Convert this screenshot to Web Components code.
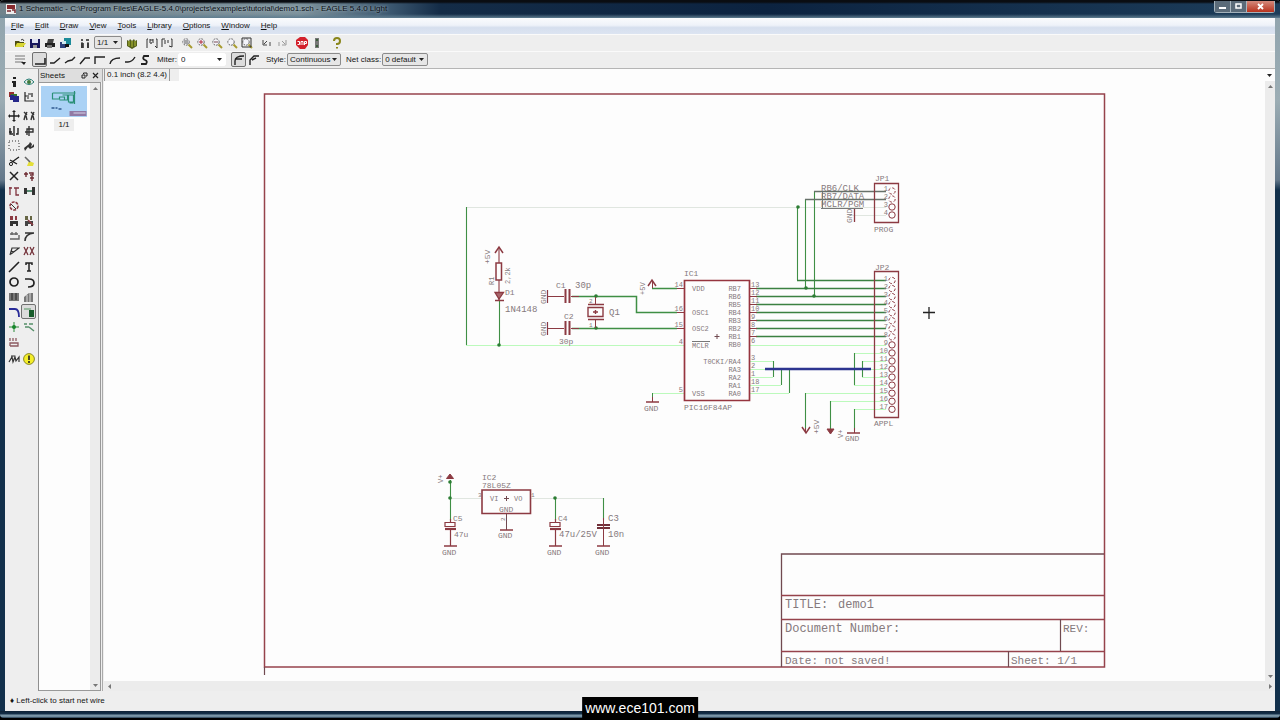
<!DOCTYPE html>
<html lang="en">
<head>
<meta charset="utf-8">
<title>1 Schematic - demo1.sch - EAGLE 5.4.0 Light</title>
<style>
html,body{height:100%;margin:0}
body{background:#000;font:8px/12px "Liberation Sans",sans-serif;color:#151515;overflow:hidden}
</style>
</head>
<body>
<eagle-window></eagle-window>
<script>
const S = (d, c = '#222', w = 1.4, f = 'none') => `<path d="${d}" stroke="${c}" stroke-width="${w}" fill="${f}"/>`;
const F = (d, c = '#222') => `<path d="${d}" fill="${c}"/>`;
const lens = '<circle cx="5" cy="5" r="3.2" fill="#f4f4fa" stroke="#666" stroke-width="1" stroke-dasharray="2 1"/>' + S('M7.5 7.5L11 11', '#a89b30', 2);
const R = '#8c3a42', G = '#3f8f45';
const ICONS = {
  open: F('M1 4h4l1 1h4v5H1z', '#4d4d12') + F('M3 6h9l-3 4H1z', '#d8d632') + S('M7 3q2-2 3 1', '#333', 1),
  save: F('M1 2h10v9H1z', '#17175c') + F('M3 2h6v4H3z', '#dfe3f2') + F('M4 8h4v3H4z', '#999'),
  print: F('M1 6h10v4H1z') + F('M4 2h6l-1 4H3z', '#444') + F('M3 8h5v3H3z', '#777'),
  cam: F('M5 1h7v7H5z', '#1c8b9a') + F('M1 5h6v6H1z', '#2c3f7a') + F('M3 4h4v3H3z', '#cfe9ef') + F('M6 7h4v3H6z', '#111'),
  board: F('M2 2h2v2H2zM7 2h3v2H7zM2 6h3v5H2zM8 6h2v5H8z', '#555') + S('M3 5v6M9 5v6', '#222', 1),
  use: F('M1 3l2 1 1-2 2 2 2-2 1 2 2-1v6l-5 3-5-3z', '#55601c') + S('M3 4v5M6 4v6M9 4v5', '#b5c136', 1),
  script: S('M1 11V2h1M4 2v4M7 2v4M4 3h3M10 2h1v9l-2-2', '#333', 1) + F('M4 5h2v2H4z', '#777'),
  run: S('M1 10V2h3M4 3v4M7 3v3M10 2h1v8l-3-1', '#333', 1),
  zfit: lens + S('M3 4h4M3 6h4', '#555', 1), zin: lens + S('M3 5h4M5 3v4', '#b02838', 1),
  zout: lens + S('M3 5h4', '#7a4b55', 1), zredraw: lens, zsel: lens + S('M1 1h9v9H1z', '#333', 1),
  undo: S('M2 3v5h4M3 7l3-3M9 5v4', '#444', 1), redo: S('M10 3v5H6M9 7L6 4M3 5v4', '#999', 1),
  stop: F('M4 0h5l3 3v5l-3 4H4L0 8V3z', '#d3202b') + S('M1.5 4.500h2v3h-2M5 8V4.500h2V8M8.500 8V4.500h2v2h-2', '#fff', 1),
  go: F('M4 1h4v10H4z', '#777') + F('M5 2h2v2H5zM5 8h2v2H5z', '#3b5d3b'),
  help: S('M3 4q0-3 3-3t3 3-3 3v1M6 10v1.5', '#8a861a', 2),
  list: S('M1 2h10M1 5h10M1 8h8', '#777', 1) + F('M7 8h5l-2 3z'),
  b0: S('M1 10h10V4', '#222', 1.6), b1: S('M1 9h4l6-5'), b2: S('M1 9l3-2 4-1 3-3'), b3: S('M1 10l5-6h5'),
  b4: S('M1 10V3h10'), b5: S('M1 10q1-6 10-6'), b6: S('M1 8h3q4 0 7-5'), b7: S('M10 2H5q-2 3 1 4t1 4H2', '#222', 1.8),
  m0: S('M2 11V7q0-5 9-5M3 5l6 0', '#222', 1.4), m1: S('M2 11V6l4-4h5M4 6l4-2', '#222', 1.4),
  info: F('M5 1h3v2H5zM4 5h4v6H5V7H4z'),
  show: S('M1 6q5-6 10 0q-5 5-10 0z', '#267d73', 1) + '<circle cx="6" cy="6" r="2" fill="#3d7a3d"/>',
  display: F('M1 1h5v5H1z', '#962e2e') + F('M3 3h6v6H3z', '#35762c') + F('M5 5h6v6H5zM2 4h4v5H2z', '#25278a'),
  mark: S('M2 1v9h9M4 7h2M5 3h3M9 2v4M2 5h4', '#222', 1.2),
  move: S('M6 1v10M1 6h10') + F('M6 0l2 2H4zM6 12l2-2H4zM0 6l2-2v4zM12 6l-2-2v4z'),
  copy: S('M1 2l3 3M4 2L2 6l-1 4M3 6l1 4M8 2l3 3M11 2L9 6l-1 4M10 6l1 4', '#333'),
  mirror: S('M6 1v10M2 3v6h3M10 3v6H8M1 7h3'), rotate: S('M6 1v10M2 7h8V4H4v6', '#333'),
  group: '<path d="M1 1h10v9H1z" fill="none" stroke="#333" stroke-dasharray="1 2"/>',
  change: F('M1 8l5-4 1-2 2 2-1 3 3-3v3L7 9 5 7l-3 4z', '#333'),
  cut: S('M11 2L4 7M2 5l7 4') + '<circle cx="3" cy="9" r="1.6" fill="none" stroke="#222"/>',
  paste: F('M6 6l5 2-1 3H4z', '#e4df38') + S('M2 2l5 5', '#666', 1.6),
  del: S('M2 2l8 8M10 2l-8 8', '#222', 1.5),
  add: S('M1 4h4M3 2v5M6 3h4v2H7M7 8h4M9 6v5', '#6d2b32', 1.4),
  pinswap: S('M2 2v8M1 3h3M6 3h5M8 3v7h3', '#803540', 1.3),
  replace: F('M1 3h3v6H1zM9 2h3v8H9z', '#333') + S('M4 6h5', '#286a4b'),
  gate: '<circle cx="6" cy="6" r="4" fill="none" stroke="#8c3a42" stroke-width="1.6" stroke-dasharray="3 1"/>' + S('M3 4l5 5', '#333', 1),
  name: F('M2 1h3v4H2zM7 1h2v4H7z', R) + F('M2 6h8v5H8V9H5v2H2z', '#333'),
  value: F('M2 1h3v4H2zM7 1h2v4H7z', '#664') + F('M2 6h8v5H8V9H5v2H2z', '#444') + S('M5 5l5 5', R, 1.6),
  smash: S('M2 4h8M2 9h9V5M4 2v3M8 2v3', '#666', 1.4), miter: S('M2 11q0-7 9-8M2 3h9', '#333', 1.6),
  split: S('M2 10L4 3h7L3 9M3 6l3 1', '#333', 1.2), invoke: S('M1 2l4 8M5 2L1 10M7 2l4 8M11 2l-4 8', '#74333b', 1.3),
  wire: S('M1 11L11 1', '#222', 1.6), text: S('M3 4V2h6v2M6 2v8M4 10h4', '#222', 1.5),
  circle: '<circle cx="6" cy="6" r="4" fill="none" stroke="#222" stroke-width="1.7"/>',
  arc: S('M2 3h4q5 0 5 4t-6 4', '#222', 1.7), rect: F('M1 2h10v8H1z', '#777') + S('M4 2v7M8 2v7', '#222', 1),
  poly: F('M1 6l5-4h4v9H1z', '#777') + S('M4 4v7M7 2v9', '#ddd', 1),
  bus: S('M1 3h6q4 0 4 8', '#282b99', 1.8), net: S('M1 3h7', '#81ae8b', 1.5) + F('M6 4h5v7H6z', '#185d2c'),
  junction: S('M6 1v10M1 6h10', '#2d8a3a', 1) + '<circle cx="6" cy="6" r="2" fill="#16862b"/>',
  label: S('M1 3h3M6 3h4M2 6h4M6 6l5 4', '#56906a', 1.5),
  attr: S('M2 2v3M5 2v3M8 2v3M2 10V7h8v3H2', '#8c5960', 1.3),
  erc: S('M1 9l3-5 1 5 2-5 1 4 3-4v5M3 3h4', '#333', 1.2),
  errors: '<circle cx="6" cy="6" r="5.4" fill="#f4ee29" stroke="#8b8822"/>' + S('M6 2.500v4.500M6 8v2', '#222', 1.6)
};
const define = (tag, css, html) => customElements.define(tag, class extends HTMLElement {
  connectedCallback() {
    if (this.shadowRoot) return;
    const r = this.attachShadow({ mode: 'open' });
    r.innerHTML = `<style>*{box-sizing:border-box}${css}</style>` + (typeof html === 'function' ? html(this) : html);
  }
});
const tools = (list, pressed = '') => list.split(' ').map(n => `<tool-button icon="${n}"${n === pressed ? ' pressed' : ''}></tool-button>`).join('');

define('tool-button', `
:host{display:flex;width:15px;height:15px;flex:none}
button{display:flex;align-items:center;justify-content:center;width:100%;height:100%;padding:0;border:1px solid transparent;border-radius:2px;background:none}
:host([pressed]) button{border-color:#707070;background:#dcdcdc}
svg{width:12px;height:12px;flex:none}`,
  e => `<button aria-label="${e.getAttribute('icon')}"><svg viewBox="0 0 12 12">${ICONS[e.getAttribute('icon')]}</svg></button>`);

define('combo-box', `
:host{display:flex;align-items:center;gap:1px;flex:none}
select{appearance:none;height:13px;width:var(--w,50px);margin:0;padding:0 0 0 2px;border:1px solid #8b8b8b;border-radius:2px;font:inherit;line-height:11px;color:#151515;
background:#e6e6e6 url("data:image/svg+xml,%3Csvg xmlns='http://www.w3.org/2000/svg' width='5' height='3'%3E%3Cpath d='M0 0h5L2.500 3z' fill='%23222'/%3E%3C/svg%3E") no-repeat right 3px center}
:host([flat]) select{background-color:#fff;border-color:#fff}`,
  e => {
    const label = e.getAttribute('label');
    return `${label ? `<label for="s">${label}</label>` : ''}<select id="s" aria-label="${label || 'Sheet'}"><option>${e.getAttribute('value')}</option></select>`;
  });

define('title-bar', `
:host{display:flex;align-items:center;height:18px;padding-left:6px;background:linear-gradient(#0a0d12 0,#0a0d12 2px,transparent 4px,transparent 14px,#5f7d90 18px),linear-gradient(90deg,#71838c,#7d929c 300px,#3c5870 390px,#142c47 440px,#0c2340 60%,#1d3d5a)}
.app{width:10px;height:10px;flex:none}
h1{flex:1;margin:0 0 0 3px;font:inherit;color:#0b0f14;white-space:nowrap;text-shadow:0 0 3px #b9c8d0}
.ctl{display:flex;align-self:flex-start;margin-top:1px;border:1px solid #a4b2bb;border-top:0;border-radius:0 0 3px 3px}
button{width:16px;height:11px;padding:0;border:0;border-right:1px solid #aab7c0;background:#5b6b79;display:flex;align-items:center;justify-content:center}
button:last-child{width:27px;border:0;background:linear-gradient(#d48a7c,#b8321d)}
.ctl{margin-right:5px}
svg{width:9px;height:7px}`,
  `<svg class="app" viewBox="0 0 10 10"><path d="M0 0h10v10H0z" fill="#eee"/><path d="M1 1h8v4H1z" fill="#872b30"/><path d="M1 7h4M6 6h3v3" stroke="#7b2a30" stroke-width="1.500" fill="none"/></svg>
<h1>1 Schematic - C:\\Program Files\\EAGLE-5.4.0\\projects\\examples\\tutorial\\demo1.sch - EAGLE 5.4.0 Light</h1>
<div class="ctl"><button aria-label="Minimize"><svg viewBox="0 0 9 7"><path d="M1 4h7v2H1z" fill="#fff"/></svg></button><button aria-label="Maximize"><svg viewBox="0 0 9 7"><path d="M2 1h5v4H2z" fill="none" stroke="#fff" stroke-width="1.500"/></svg></button><button aria-label="Close"><svg viewBox="0 0 9 7"><path d="M2 1l5 5M7 1L2 6" stroke="#fff" stroke-width="1.800"/></svg></button></div>`);

define('menu-bar', `
:host{display:flex;align-items:center;height:16px;gap:11px;padding-left:6px;background:linear-gradient(#fafbfd,#eef2f9 45%,#d6dfee 60%,#dce4f1)}
button{padding:0;border:0;background:none;font:inherit;color:inherit}
button::first-letter{text-decoration:underline}`,
  'File Edit Draw View Tools Library Options Window Help'.split(' ').map(t => `<button>${t}</button>`).join(''));

define('tool-bar', `
:host{display:flex;align-items:center;height:17px;gap:5px;padding:0 0 1px 7px;box-sizing:border-box;background:#eee;border-top:1px solid #fafafa}
::slotted(div){display:flex;align-items:center}
::slotted(.sheet){gap:2px}`, '<slot></slot>');

define('tool-palette', `
:host{display:flex;flex-direction:column;gap:4px;width:34px;box-sizing:border-box;flex:none;background:#eee;padding:5px 2px 0 1px;border-right:1px solid #8f8f8f}
div{display:grid;grid-template-columns:15px 15px;grid-auto-rows:1fr}
.a{height:30px}.b{height:147px}.c{height:88px}.d{height:15px}
.b tool-button:nth-child(14){grid-column:1}.c tool-button:last-child{grid-column:1}`,
  `<div class="a">${tools('info show display mark')}</div>
<div class="b">${tools('move copy mirror rotate group change cut paste del add pinswap replace gate name value smash miter split invoke')}</div>
<div class="c">${tools('wire text circle arc rect poly bus net junction label attr', 'net')}</div>
<div class="d">${tools('erc errors')}</div>`);

define('scroll-bar', `
:host{display:flex;flex-direction:column;justify-content:space-between;align-items:center;width:10px;flex:none;background:#ececec}
:host([horizontal]){flex-direction:row;width:auto;height:10px}
button{width:10px;height:10px;padding:0;border:0;background:none;display:flex;align-items:center;justify-content:center}
svg{width:5px;height:5px}`,
  e => (e.hasAttribute('horizontal') ? ['M4 0v5L1 2.500z', 'M1 0v5l3-2.500z'] : ['M0 4h5L2.500 1z', 'M0 1h5L2.500 4z'])
    .map((d, i) => `<button aria-label="${i ? 'Forward' : 'Back'}"><svg viewBox="0 0 5 5"><path d="${d}" fill="#777"/></svg></button>`).join(''));

define('sheet-dock', `
:host{display:flex;flex-direction:column;width:64px;box-sizing:border-box;flex:none;background:#eee;border-right:1px solid #aaa}
header{display:flex;align-items:center;gap:4px;height:13px;padding:0 3px 0 1px;background:#dedede}
h2{flex:1;margin:0;font:inherit}
header svg{width:7px;height:7px}
section{flex:1;display:flex;margin-right:1px;border:1px solid #999;border-left:0;background:#fdfdfd}
figure{flex:1;margin:3px 3px 0 2px;text-align:center}
.t{display:block;width:100%;height:31px;background:#abd2f5}
figcaption{display:inline-block;padding:0 4px;margin-top:2px;background:#eee}`,
  `<header><h2>Sheets</h2><svg viewBox="0 0 7 7">${S('M2.500 2V1H6v3H5M1 3h3v3H1z', '#222', 1)}</svg><svg viewBox="0 0 7 7">${S('M1 1l5 5M6 1L1 6', '#222', 1.2)}</svg></header>
<section><figure><svg class="t" viewBox="0 0 45 31">${S('M11 7h23M11 7v6h7v-2h5v3h-5M33 5v13M27 9h5v7h-5zM21 9h5v5h-5M28 17h4', '#2a8f77', 1.2)}${S('M10 22h3M14 22h2M17 23h3', '#4d76a8', 2)}<path d="M28 25h17v5H28z" fill="#917aa5"/><path d="M32 27h12" stroke="#d7d3ea"/></svg><figcaption>1/1</figcaption></figure><scroll-bar></scroll-bar></section>`);

/* Schematic drawing primitives, in sheet coordinates */
const L = (c, w, ...d) => `<path d="${d.join('')}" fill="none" stroke="${c}" stroke-width="${w}"/>`;
const T = (x, y, s, z = 8, extra = '') => `<text x="${x}" y="${y}" font-size="${z}" ${extra}>${s}</text>`;
const V = (x, y, s, z = 8) => `<text transform="translate(${x} ${y}) rotate(-90)" font-size="${z}">${s}</text>`;
const J = (x, y) => `<circle cx="${x}" cy="${y}" r="1.800" fill="#2c7d34"/>`;
const LG = '#bcfabc', DK = '#704a50';
const end = 'text-anchor="end"';
function schematic() {
  let o = '';
  o += L('#96434c', 1.5, 'M264.500 94H1104.500V667H264.500z');
  o += L(DK, 1.3, 'M781.500 667V554H1104') + L('#96434c', 1.3, 'M781 595.500H1104M781 619.500H1104M781 651.500H1104') + L(DK, 1.2, 'M1060.500 619V651M1008.500 651V667M264.500 667v8');
  o += T(785, 608, 'TITLE:', 12) + T(838, 608, 'demo1', 12) + T(785, 632, 'Document Number:', 12) + T(1063, 632, 'REV:', 11) + T(785, 664, 'Date: not saved!', 11) + T(1011, 664, 'Sheet: 1/1', 11);
  // nets drawn faintly
  o += L('#e0e6e0', 1, 'M466 207.500H886M850 215.500H886M450 498.500H482M531 498.500H603');
  o += L(LG, 1, 'M466 345.500H684M652 393.500H684M749 345.500H886M749 361.500H773M749 369.500H765M749 377.500H773M749 385.500H781M749 393.500H789M854 353.500H886M862 361.500H886M871 369.500H886M862 377.500H886M854 385.500H886M806 393.500H886M830 401.500H886M854 409.500H886');
  // nets
  o += L(G, 1.1, 'M466.500 207V345M797.500 207V280M805.500 199V288M814.500 191V296M773.500 361V377M781.500 369V385M789.500 369V393M854.500 353V385M862.500 361V377M805.500 393V430M830.500 401V430M854.500 409V431M450.500 480V520M555.500 498V520M603.500 498V520M499.500 300V345');
  o += L('#3b8141', 1.5, 'M797 280.500H886', ...[288, 296, 304, 312, 320, 328, 336].map(y => `M756 ${y}.500H886`));
  o += L('#67716a', 1.3, 'M814 191.500H886M805 199.500H886');
  o += L(G, 1.5, 'M572 296.500H636.500V312.500H677M572 328.500H677M652 288.500H677');
  o += L(R, 1.2, ...[288, 312, 328].map(y => `M677 ${y}.500h7`), ...[288, 296, 304, 312, 320, 328, 336].map(y => `M749 ${y}.500h8`));
  o += L('#2d3590', 2.4, 'M765 369H871');
  o += [[798, 207], [806, 288], [814, 296], [499, 345], [596, 296], [596, 328], [450, 482], [450, 498], [555, 498]].map(p => J(...p)).join('');
  // IC1
  o += L('#96353f', 1.7, 'M684.500 280.500H749.500V400.500H684.500z') + T(684, 276, 'IC1') + T(684, 410, 'PIC16F84AP', 8) + L(DK, 1, 'M714.500 336.500h5M717 334v5');
  [['VDD', 291], ['OSC1', 315], ['OSC2', 331], ['MCLR', 348], ['VSS', 396]].forEach(([s, y]) => o += T(692, y, s, 7));
  o += L('#777', 1, 'M692 341.500H710');
  ['RB7', 'RB6', 'RB5', 'RB4', 'RB3', 'RB2', 'RB1', 'RB0'].forEach((s, i) => o += T(741, 291 + i * 8, s, 7, end));
  ['T0CKI/RA4', 'RA3', 'RA2', 'RA1', 'RA0'].forEach((s, i) => o += T(741, 364 + i * 8, s, 7, end));
  [13, 12, 11, 10, 9, 8, 7, 6].forEach((s, i) => o += T(751, 287 + i * 8, s, 7));
  [3, 2, 1, 18, 17].forEach((s, i) => o += T(751, 360 + i * 8, s, 7));
  [[14, 287], [16, 311], [15, 327], [4, 344], [5, 392]].forEach(([s, y]) => o += T(683, y, s, 7, end));
  // headers
  o += L(R, 1.3, 'M874.500 183.500H898.500V222.500H874.500zM874.500 271.500H898.500V417.500H874.500z');
  o += T(875, 181, 'JP1') + T(874, 232, 'PROG') + T(875, 270, 'JP2') + T(874, 426, 'APPL', 8);
  const pin = (y, n, dash) => `<circle cx="892" cy="${y}" r="3.200" fill="none" stroke="${R}" ${dash ? 'stroke-dasharray="3 2"' : ''}/>` + T(888, y, n, 7, end);
  for (let i = 0; i < 4; i++) o += pin(191 + i * 8, i + 1, i < 2);
  for (let i = 0; i < 17; i++) o += pin(280.5 + i * 8.05, i + 1, i < 8);
  o += T(821, 191, 'RB6/CLK', 9) + T(821, 199, 'RB7/DATA', 9) + T(821, 207, 'MCLR/PGM', 9) + L('#777', 1, 'M821 208.500h42M822.500 192v16') + V(852, 223, 'GND') + L(R, 1.3, 'M854.500 209V222');
  // supplies
  const up = (x, y) => L(R, 1.5, `M${x - 4} ${y + 6}L${x} ${y}L${x + 4} ${y + 6}`);
  const gnd = (x, y, ty = y + 9) => L(R, 1.5, `M${x - 6} ${y}h13`) + T(x - 8, ty, 'GND');
  o += up(652, 280) + L(R, 1, 'M652.500 280v8') + V(645, 295, '+5V', 7) + L(G, 1, 'M652.500 393v4') + L(R, 1, 'M652.500 397v5') + gnd(652, 402);
  o += L(R, 1.5, 'M802 427l4 6 4-6') + `<path d="M827 429h7l-3.500 5z" fill="${R}" stroke="${R}"/>` + L(R, 1, 'M805.500 428v5M854.500 428v5') + V(819, 434, '+5V', 8) + V(843, 438, 'V+', 7) + gnd(853, 433, 441);
  // R1, D1
  o += up(499, 247) + V(490, 264, '+5V', 8) + L(R, 1.1, 'M499 247v16M499 280v20') + L(R, 1.5, 'M496 263h5.500v17H496z') + V(494, 285, 'R1', 7) + V(510, 284, '2,2k', 7);
  o += `<path d="M495 292.500h8.500L499 299z" fill="#a8666c" stroke="${R}" stroke-width="1.300"/>` + L(R, 1.5, 'M495 300.500h9') + T(505, 295, 'D1', 8) + T(505, 312, '1N4148', 9);
  // C1, C2, Q1
  [296, 328].forEach(y => o += V(546, y + 8, 'GND') + L(R, 1.2, `M547.500 ${y - 6}v13M547 ${y}.500h17M571 ${y}.500h8`) + L(R, 2, `M565.500 ${y - 7}v14M569.500 ${y - 7}v14`));
  o += T(556, 288, 'C1', 8) + T(575, 288, '30p', 9) + T(564, 319, 'C2', 8) + T(559, 344, '30p', 8) + T(609, 315, 'Q1', 9);
  o += L(R, 1.4, 'M588 304.500h16M588 307.500h15v9h-15zM588 319.500h16M593 312h5M595.500 310v4') + L(R, 1, 'M595.500 297v7M595.500 320v8') + T(589, 303, '2', 6) + T(589, 327, '1', 6);
  // voltage regulator
  o += `<path d="M446.500 478.500L450 474l3.500 4.500z" fill="${R}" stroke="${R}"/>` + V(443, 483, 'V+', 7);
  o += L(R, 1.6, 'M482 490H530.500V513.500H482z') + T(482, 480, 'IC2') + T(482, 488, '78L05Z', 8) + T(490, 501, 'VI', 7) + T(514, 501, 'VO', 7) + T(499, 512, 'GND') + T(478, 497, '3', 6) + T(531, 497, '1', 6) + V(505, 521, '2', 6) + L(DK, 1, 'M504 498.500h5M506.500 496v5M506.500 514V530') + gnd(506, 530, 538);
  [450, 555].forEach(x => o += L(R, 1.2, `M${x - 5} 522.500h10v4h-10zM${x}.500 519v3M${x}.500 530v16`) + L(R, 2.2, `M${x - 5} 529h11`) + gnd(x, 546, 555));
  o += T(453, 521, 'C5', 8) + T(454, 537, '47u', 8) + T(558, 521, 'C4', 8) + T(559, 537, '47u/25V', 9);
  o += L('#713039', 1.8, 'M597 525h13M597 528h13') + L(R, 1, 'M603.500 518v28') + gnd(603, 546, 555) + T(608, 521, 'C3', 9) + T(608, 537, '10n', 9);
  o += L('#222', 1.3, 'M923 312.500h12M929 307v12');
  return o;
}

define('schematic-view', `
:host{display:flex;flex-direction:column;flex:1;min-width:0;background:#fdfdfd;margin-left:1px}
header{display:flex;align-items:center;height:12px;padding-right:3px}
output{width:66px;height:12px;padding-left:2px;background:#eee;border-right:1px solid #999;border-left:1px solid #999;white-space:nowrap}
i{width:9px;height:12px;background:#eee}
header svg{width:5px;height:3px;margin-left:auto}
main{flex:1;display:flex;min-height:0}
.sheet{flex:1;min-width:0;width:100%;height:100%;font-family:"Liberation Mono",monospace}
text{fill:#85797c}`,
  () => `<header><output>0.1 inch (8.2 4.4)</output><i></i><svg viewBox="0 0 5 3"><path d="M0 0h5L2.500 3z" fill="#222"/></svg></header>
<main><svg class="sheet" viewBox="104 81 1160 600" preserveAspectRatio="xMinYMin meet">${schematic()}</svg><scroll-bar></scroll-bar></main>
<scroll-bar horizontal></scroll-bar>`);

define('status-bar', `:host{display:flex;align-items:center;height:20px;padding-left:5px;background:#eee}`, '<slot></slot>');
define('site-badge', `
:host{position:absolute;bottom:0;left:50%;transform:translateX(-50%);background:#000;height:23px;padding:0 3px}
a{color:#fff;text-decoration:none;font:14px/23px "Liberation Sans",sans-serif}`, '<a href="#">www.ece101.com</a>');

define('eagle-window', `
:host{display:flex;flex-direction:column;height:100vh;position:relative}
.frame{flex:1;display:flex;flex-direction:column;min-height:0;margin-bottom:2px;background:linear-gradient(#8fa3ad,#9cadb4 100px,#64788a 180px,#12304b 190px,#12304b);border-radius:4px;overflow:hidden}
.client{flex:1;display:flex;flex-direction:column;min-height:0;margin:0 5px;background:#eee}
.work{flex:1;display:flex;min-height:0;border-top:1px solid #b5b5b5}
.edge{height:7px;background:linear-gradient(#0d2135 0,#14304a 3px,#7f9aaa 4px,#6b8799 6px,#0d2135)}`,
  `<div class="frame"><title-bar></title-bar><div class="client"><menu-bar></menu-bar>
<tool-bar><div>${tools('open save print cam')}</div><div class="sheet">${tools('board')}<combo-box value="1/1" style="--w:28px"></combo-box>${tools('use')}</div><div>${tools('script run')}</div><div>${tools('zfit zin zout zredraw zsel')}</div><div>${tools('undo redo')}</div><div>${tools('stop go')}</div><div>${tools('help')}</div></tool-bar>
<tool-bar><div>${tools('list')}</div><div>${tools('b0 b1 b2 b3 b4 b5 b6 b7', 'b0')}</div><combo-box flat label="Miter:" value="0" style="--w:48px"></combo-box><div>${tools('m0 m1', 'm0')}</div><combo-box label="Style:" value="Continuous" style="--w:54px"></combo-box><combo-box label="Net class:" value="0 default" style="--w:46px"></combo-box></tool-bar>
<div class="work"><tool-palette></tool-palette><sheet-dock></sheet-dock><schematic-view></schematic-view></div>
<status-bar>♦ Left-click to start net wire</status-bar></div><div class="edge"></div></div><site-badge></site-badge>`);
</script>
</body>
</html>
